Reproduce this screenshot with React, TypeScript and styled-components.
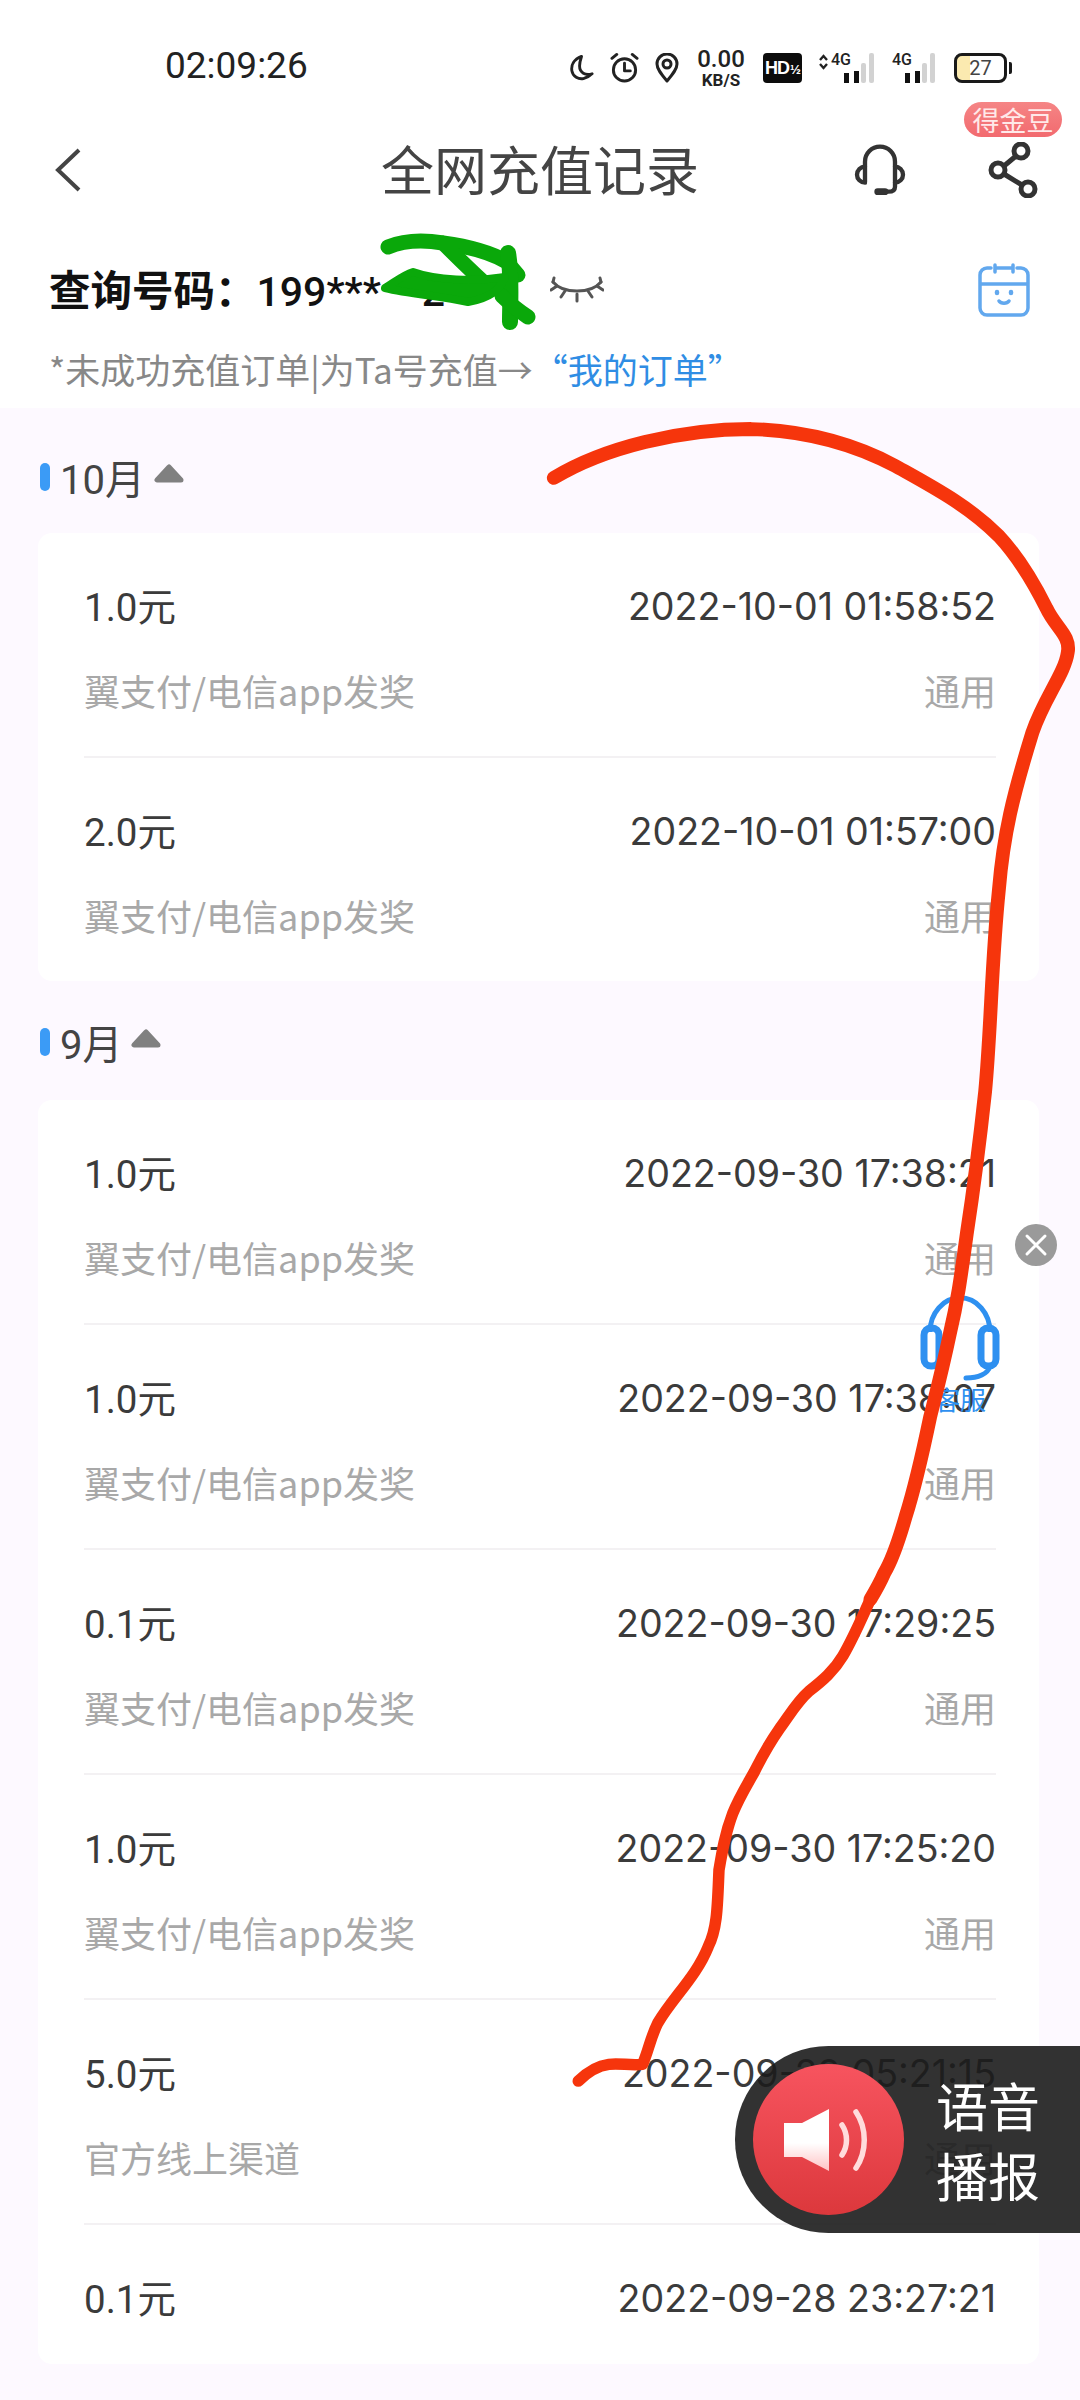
import React from "react";
import styled, { createGlobalStyle } from "styled-components";

const Global = createGlobalStyle`
  html, body { margin: 0; padding: 0; background: #fff; }
  body { font-family: Inter, "Noto Sans CJK SC", sans-serif; }
  #root { width: 1080px; height: 2400px; overflow: hidden; }
  * { box-sizing: border-box; }
`;

const Page = styled.div`
  position: relative;
  width: 1080px;
  height: 2400px;
  overflow: hidden;
  display: flex;
  flex-direction: column;
  background: #fff;
`;

const StatusBar = styled.div`
  flex: none;
  height: 102px;
  padding: 46px 68px 0 165px;
  display: flex;
  align-items: flex-start;
  justify-content: space-between;
`;
const Clock = styled.div`
  font-family: Roboto, sans-serif;
  font-size: 37px;
  line-height: 40px;
  color: #222;
`;
const StatusIcons = styled.div`
  display: flex;
  align-items: center;
  height: 44px;
  gap: 16px;
`;
const Speed = styled.div`
  width: 52px;
  display: flex;
  flex-direction: column;
  align-items: center;
  font-family: Roboto, sans-serif;
  color: #222;
  font-size: 24px;
  line-height: 24px;
  font-weight: 500;
  small { font-size: 17px; line-height: 18px; font-weight: 700; }
`;
const HdBadge = styled.div`
  width: 39px;
  height: 30px;
  border-radius: 4px;
  background: #0c0c0c;
  color: #fff;
  font-family: "Liberation Sans", sans-serif;
  font-size: 18px;
  font-weight: 700;
  line-height: 30px;
  padding-left: 2px;
  letter-spacing: -1px;
  white-space: nowrap;
  small { font-size: 13px; letter-spacing: 0; margin-left: 1px; }
`;
const Signal = styled.div<{ $wide?: boolean }>`
  position: relative;
  width: ${(p) => (p.$wide ? "56px" : "43px")};
  height: 30px;
  margin-left: ${(p) => (p.$wide ? "0" : "2px")};
  span {
    position: absolute;
    top: -1px;
    left: ${(p) => (p.$wide ? "13px" : "0")};
    font-family: Roboto, sans-serif;
    font-size: 16px;
    line-height: 16px;
    font-weight: 500;
    color: #222;
  }
`;
const UpDown = styled.svg`
  position: absolute;
  left: 0;
  top: 1px;
`;
const Bars = styled.svg`
  position: absolute;
  right: 0;
  top: 0;
`;
const Battery = styled.div`
  width: 53px;
  height: 30px;
  border: 3px solid #1a1a1a;
  border-radius: 8px;
  overflow: hidden;
  background: linear-gradient(90deg, #fbeab0 0 27%, #fff 27%);
  color: #444;
  font-family: Roboto, sans-serif;
  font-size: 20px;
  line-height: 24px;
  text-align: center;
`;
const BatteryWrap = styled.div`
  display: flex;
  align-items: center;
  gap: 2px;
  margin-left: 3px;
  &::after {
    content: "";
    width: 3px;
    height: 12px;
    border-radius: 0 2px 2px 0;
    background: #1a1a1a;
  }
`;

const NavBar = styled.div`
  flex: none;
  position: relative;
  height: 136px;
  display: flex;
  align-items: center;
  padding: 0 42px 0 54px;
`;
const Title = styled.h1`
  position: absolute;
  left: 0;
  right: 0;
  top: 35px;
  margin: 0;
  text-align: center;
  font-size: 53px;
  line-height: 62px;
  font-weight: 400;
  color: #444;
  font-family: "Noto Sans CJK SC", sans-serif;
`;
const NavIcons = styled.div`
  margin-left: auto;
  display: flex;
  align-items: center;
  gap: 81px;
`;
const CoinBadge = styled.div`
  position: absolute;
  left: 964px;
  top: 0;
  width: 98px;
  height: 35px;
  border-radius: 18px;
  background: linear-gradient(180deg, #f58585, #f26a6f);
  color: #ffe9e9;
  font-family: "Noto Sans CJK SC", sans-serif;
  font-size: 27px;
  line-height: 35px;
  text-align: center;
`;

const QueryHead = styled.div`
  flex: none;
  padding: 24px 50px 0 49px;
  height: 170px;
`;
const QueryRow = styled.div`
  display: flex;
  align-items: center;
  height: 56px;
`;
const QueryText = styled.div`
  font-family: "Noto Sans CJK SC", sans-serif;
  font-size: 41.5px;
  line-height: 56px;
  font-weight: 700;
  color: #111;
  width: 501px;
  white-space: nowrap;
  b { font-family: Roboto, sans-serif; font-weight: 500; font-size: 41px; }
`;
const CalendarSlot = styled.div`
  margin-left: auto;
  display: flex;
`;
const Hint = styled.div`
  margin-top: 28px;
  font-family: "Noto Sans CJK SC", sans-serif;
  font-size: 35px;
  line-height: 46px;
  color: #888;
  white-space: nowrap;
  a { color: #2f8de4; }
`;

const Body = styled.div`
  flex: 1;
  background: #fdf9ff;
  padding: 0 41px 0 38px;
`;
const MonthHead = styled.div<{ $first?: boolean }>`
  display: flex;
  align-items: center;
  height: ${(p) => (p.$first ? "125px" : "119px")};
  padding: ${(p) => (p.$first ? "12px" : "2px")} 0 0 2px;
  font-size: 40px;
  color: #444;
  font-family: Roboto, "Noto Sans CJK SC", sans-serif;
`;
const Pill = styled.span`
  width: 10px;
  height: 28px;
  border-radius: 5px;
  background: #3b9bf6;
  margin-right: 10px;
`;
const Caret = styled.svg`
  margin-left: 8px;
  margin-top: -6px;
`;
const Card = styled.div`
  background: #fff;
  border-radius: 14px;
  padding: 0 43px 0 46px;
`;
const Row = styled.div<{ $last?: boolean; $short?: boolean }>`
  height: ${(p) => (p.$short ? "139px" : p.$last ? "223px" : "225px")};
  padding-top: 46px;
  border-bottom: ${(p) => (p.$last ? "none" : "2px solid #f3f1f3")};
`;
const TopLine = styled.div`
  display: flex;
  justify-content: space-between;
  align-items: center;
  height: 50px;
`;
const Amount = styled.span`
  font-family: Roboto, "Noto Sans CJK SC", sans-serif;
  font-size: 38.5px;
  color: #3b3b3b;
`;
const DateText = styled.span`
  margin-top: 4px;
  font-family: Inter, sans-serif;
  font-size: 37.6px;
  color: #3b3b3b;
`;
const BottomLine = styled.div`
  display: flex;
  justify-content: space-between;
  align-items: center;
  height: 50px;
  margin-top: 36px;
  font-size: 36px;
  color: #a8a8a8;
  font-family: "Noto Sans CJK SC", sans-serif;
`;

const Scribble = styled.svg`
  position: absolute;
  left: 0;
  top: 0;
  width: 1080px;
  height: 2400px;
  pointer-events: none;
`;

const CloseBall = styled.div`
  position: absolute;
  left: 1015px;
  top: 1224px;
  width: 42px;
  height: 42px;
  border-radius: 50%;
  background: #9a9a9a;
  display: flex;
  align-items: center;
  justify-content: center;
`;
const Service = styled.div`
  position: absolute;
  left: 920px;
  top: 1294px;
  width: 80px;
  display: flex;
  flex-direction: column;
  align-items: center;
  color: #2e90f0;
  font-family: "Noto Sans CJK SC", sans-serif;
  font-size: 26px;
  line-height: 30px;
`;
const Voice = styled.div`
  position: absolute;
  left: 735px;
  top: 2046px;
  width: 345px;
  height: 187px;
  border-radius: 94px 0 0 94px;
  background: rgba(28, 28, 28, 0.9);
  display: flex;
  align-items: center;
  padding-left: 18px;
`;
const VoiceBall = styled.div`
  width: 151px;
  height: 151px;
  border-radius: 50%;
  background: linear-gradient(180deg, #f7545f, #dc383c);
  display: flex;
  align-items: center;
  justify-content: center;
`;
const VoiceLabel = styled.div`
  margin-left: 32px;
  width: 104px;
  color: #fff;
  font-family: "Noto Sans CJK SC", sans-serif;
  font-size: 52px;
  line-height: 70px;
`;

const months = [
  {
    label: "10月",
    rows: [
      ["1.0元", "2022-10-01 01:58:52", "翼支付/电信app发奖", "通用"],
      ["2.0元", "2022-10-01 01:57:00", "翼支付/电信app发奖", "通用"],
    ],
  },
  {
    label: "9月",
    rows: [
      ["1.0元", "2022-09-30 17:38:21", "翼支付/电信app发奖", "通用"],
      ["1.0元", "2022-09-30 17:38:07", "翼支付/电信app发奖", "通用"],
      ["0.1元", "2022-09-30 17:29:25", "翼支付/电信app发奖", "通用"],
      ["1.0元", "2022-09-30 17:25:20", "翼支付/电信app发奖", "通用"],
      ["5.0元", "2022-09-29 05:21:15", "官方线上渠道", "通用"],
      ["0.1元", "2022-09-28 23:27:21", "", ""],
    ],
  },
];

const Line = { fill: "none", stroke: "#222", strokeWidth: 3, strokeLinecap: "round", strokeLinejoin: "round" } as const;
const Nav = { fill: "none", stroke: "#333", strokeWidth: 13, strokeLinecap: "round", strokeLinejoin: "round" } as const;
const Cal = { fill: "none", stroke: "#62a8ee", strokeWidth: 3.5, strokeLinecap: "round", strokeLinejoin: "round" } as const;
const Ink = { fill: "none", strokeLinecap: "round", strokeLinejoin: "round" } as const;

function SignalBars() {
  return (
    <Bars width="30" height="30" viewBox="0 0 30 30">
      <rect x="0" y="20" width="5" height="10" fill="#111" />
      <rect x="10" y="18" width="5" height="12" fill="#111" />
      <rect x="17" y="10" width="5" height="20" rx="2" fill="#d2d2d2" />
      <rect x="25" y="0" width="5" height="30" rx="2" fill="#d2d2d2" />
    </Bars>
  );
}

export default function App() {
  return (
    <Page>
      <Global />
      <StatusBar>
        <Clock>02:09:26</Clock>
        <StatusIcons>
          <svg width="25" height="28" viewBox="0 0 26 28">
            <path d="M13 2C5 5 2 11 3 17c1 6 7 9 12 8 4-1 7-3 9-5-7 2-13-1-13-8 0-4 1-7 2-10z" {...Line} />
          </svg>
          <svg width="29" height="32" viewBox="0 0 30 32">
            <circle cx="15" cy="18" r="11.5" {...Line} />
            <path d="M15 11v8h6M2 6l5-4M28 6l-5-4" {...Line} />
          </svg>
          <svg width="24" height="30" viewBox="0 0 24 30">
            <path d="M12 28C6 21 2 16 2 11a10 10 0 0 1 20 0c0 5-4 10-10 17z" {...Line} />
            <circle cx="12" cy="11" r="4" {...Line} />
          </svg>
          <Speed>
            0.00
            <small>KB/S</small>
          </Speed>
          <HdBadge>HD<small>½</small></HdBadge>
          <Signal $wide>
            <UpDown width="11" height="16" viewBox="0 0 11 16">
              <path d="M2 6l3.5-4L9 6M2 10l3.5 4L9 10" fill="none" stroke="#222" strokeWidth="2.4" />
            </UpDown>
            <span>4G</span>
            <SignalBars />
          </Signal>
          <Signal>
            <span>4G</span>
            <SignalBars />
          </Signal>
          <BatteryWrap>
            <Battery>27</Battery>
          </BatteryWrap>
        </StatusIcons>
      </StatusBar>

      <NavBar>
        <svg width="28" height="44" viewBox="0 0 28 44">
          <path d="M25 2L4 22l21 20" fill="none" stroke="#444" strokeWidth="4" />
        </svg>
        <Title>全网充值记录</Title>
        <CoinBadge>得金豆</CoinBadge>
        <NavIcons>
          <svg width="54" height="52" viewBox="-6 -8 162 156">
            <path d="M30 105V45a45 45 0 0 1 90 0v75q0 15-20 15H70" {...Nav} />
            <path d="M30 60a24 24 0 0 0 0 48M120 60a24 24 0 0 1 0 48" {...Nav} />
            <path d="M68 135h22" {...Nav} strokeWidth="20" />
          </svg>
          <svg width="50" height="56" viewBox="0 0 50 56">
            <circle cx="33" cy="9" r="7" fill="none" stroke="#333" strokeWidth="5" />
            <circle cx="10" cy="28" r="7" fill="none" stroke="#333" strokeWidth="5" />
            <circle cx="40" cy="47" r="7" fill="none" stroke="#333" strokeWidth="5" />
            <path d="M28 14L16 24M16 32l18 11" stroke="#333" strokeWidth="5" />
          </svg>
        </NavIcons>
      </NavBar>

      <QueryHead>
        <QueryRow>
          <QueryText>
            查询号码：<b>199***</b><b>&nbsp;&nbsp;&nbsp;&nbsp;2</b>
          </QueryText>
          <svg width="54" height="28" viewBox="0 0 54 28">
            <path d="M3 6c10 12 38 12 48 0" fill="none" stroke="#555" strokeWidth="3" strokeLinecap="round" />
            <path d="M1 14l6-4M11 21l4-6M27 25v-7M42 21l-4-6M53 14l-6-4M50 2l1 4M4 2l-1 4" fill="none" stroke="#555" strokeWidth="3" strokeLinecap="round" />
          </svg>
          <CalendarSlot>
            <svg width="52" height="54" viewBox="0 0 52 54">
              <path d="M13 5H9a7 7 0 0 0-7 7v33a7 7 0 0 0 7 7h34a7 7 0 0 0 7-7V12a7 7 0 0 0-7-7h-4M2 21h48" {...Cal} />
              <path d="M17 2v7M35 2v7M17 5h18" {...Cal} />
              <path d="M19 29v1M33 29v1" {...Cal} strokeWidth="4.5" />
              <path d="M21 38c2 3 8 3 10 0" {...Cal} />
            </svg>
          </CalendarSlot>
        </QueryRow>
        <Hint>
          *未成功充值订单|为Ta号充值→<a>“我的订单”</a>
        </Hint>
      </QueryHead>

      <Body>
        {months.map((m, i) => (
          <React.Fragment key={m.label}>
            <MonthHead $first={i === 0}>
              <Pill />
              {m.label}
              <Caret width="32" height="20" viewBox="0 0 32 20">
                <path d="M16 3L4 16h24z" fill="#808080" stroke="#808080" strokeWidth="5" strokeLinejoin="round" />
              </Caret>
            </MonthHead>
            <Card>
              {m.rows.map((r, j) => (
                <Row key={j} $last={j === m.rows.length - 1} $short={!r[2]}>
                  <TopLine>
                    <Amount>{r[0]}</Amount>
                    <DateText>{r[1]}</DateText>
                  </TopLine>
                  {r[2] && (
                    <BottomLine>
                      <span>{r[2]}</span>
                      <span>{r[3]}</span>
                    </BottomLine>
                  )}
                </Row>
              ))}
            </Card>
          </React.Fragment>
        ))}
      </Body>

      <Voice>
        <VoiceBall>
          <svg width="90" height="64" viewBox="0 0 90 64">
            <defs>
              <linearGradient id="spk" x1="0" y1="0" x2="0" y2="1">
                <stop offset="0.55" stopColor="#ffffff" />
                <stop offset="1" stopColor="#ffc2c4" />
              </linearGradient>
            </defs>
            <path d="M0 15h18L45 1v62L18 49H0z" fill="url(#spk)" />
            <path d="M58 17c6 9 6 21 0 30M72 4c11 16 11 40 0 56" fill="none" stroke="#ffdcdc" strokeWidth="5.5" strokeLinecap="round" />
          </svg>
        </VoiceBall>
        <VoiceLabel>语音 播报</VoiceLabel>
      </Voice>

      <CloseBall>
        <svg width="26" height="26" viewBox="0 0 26 26">
          <path d="M4 4l18 18M22 4L4 22" stroke="#fff" strokeWidth="3" strokeLinecap="round" />
        </svg>
      </CloseBall>
      <Service>
        <svg width="80" height="90" viewBox="0 0 80 90">
          <path d="M10 38a29 33 0 0 1 60 0" fill="none" stroke="#2e90f0" strokeWidth="5" />
          <rect x="4" y="34" width="15" height="38" rx="7" fill="none" stroke="#2e90f0" strokeWidth="7" />
          <rect x="61" y="34" width="15" height="38" rx="7" fill="none" stroke="#2e90f0" strokeWidth="7" />
          <path d="M70 72c-2 8-12 12-24 12" fill="none" stroke="#2e90f0" strokeWidth="5" strokeLinecap="round" />
        </svg>
        客服
      </Service>

      <Scribble viewBox="0 0 1080 2400">
        <g stroke="#0aa80a" strokeLinecap="round" strokeLinejoin="round" fill="none">
          <path d="M388 247C405 240 425 240 443 243C465 246 490 252 507 262L518 275" strokeWidth="15" />
          <path d="M443 243C455 255 472 272 490 288" strokeWidth="15" />
          <path d="M508 253C512 275 510 300 510 322" strokeWidth="16" />
          <path d="M528 317C518 310 510 304 502 296" strokeWidth="15" />
          <path
            d="M385 288C395 282 403 275 413 272C435 280 475 282 505 277C500 290 490 298 468 302C440 296 410 294 385 288Z"
            fill="#0aa80a"
            strokeWidth="8"
          />
        </g>
      </Scribble>
      <Scribble viewBox="0 0 706 1568">
        <path
          d="M362 312C395 292 445 280 491 280C525 281 555 288 585 304C610 318 633 330 653 350C667 365 677 383 684 397C690 410 700 415 698 426C696 440 683 455 675 478C662 520 656 545 653 581C648 630 648 670 644 713C640 750 636 780 632 806C628 835 626 850 621 871C616 895 612 910 608 926C603 950 598 972 592 991C588 1005 584 1018 578 1028C575 1035 572 1040 569 1045"
          {...Ink}
          stroke="#f6350c"
          strokeWidth="9"
        />
        <path
          d="M569 1045C563 1058 558 1070 551 1082C545 1092 538 1098 529 1105C521 1112 516 1121 510 1129C503 1139 498 1148 493 1158C488 1167 483 1175 479 1185C474 1198 472 1210 470 1222C469 1245 469 1260 463 1272C455 1292 440 1305 430 1322C425 1332 424 1340 420 1349C412 1350 405 1348 398 1349C390 1350 384 1354 378 1360"
          {...Ink}
          stroke="#f6350c"
          strokeWidth="7.5"
        />
      </Scribble>
    </Page>
  );
}
